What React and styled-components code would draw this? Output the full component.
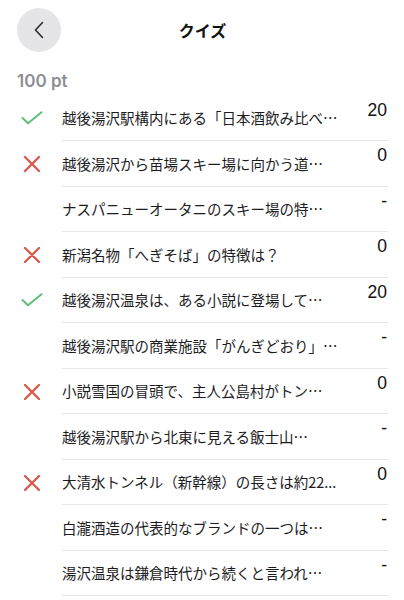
import React from "react";
import styled, { createGlobalStyle } from "styled-components";

const GlobalStyle = createGlobalStyle`
  html, body {
    margin: 0;
    padding: 0;
    background: #ffffff;
  }
  body {
    font-family: "Liberation Sans", "Noto Sans CJK JP", sans-serif;
    color: #1c1c1e;
    -webkit-font-smoothing: antialiased;
  }
`;

const Page = styled.div`
  width: 404px;
  height: 600px;
  overflow: hidden;
  box-sizing: border-box;
  padding: 0 16px 0 17px;
  background: #fff;
`;

const Header = styled.header`
  display: grid;
  grid-template-columns: 44px 1fr 44px;
  align-items: center;
  height: 44px;
  padding-top: 8px;
`;

const BackButton = styled.button`
  width: 44px;
  height: 44px;
  border-radius: 50%;
  border: none;
  padding: 0;
  background: #e5e5e7;
  display: flex;
  align-items: center;
  justify-content: center;
  cursor: pointer;
`;

const Title = styled.h1`
  margin: 0;
  text-align: center;
  font-family: "Noto Sans CJK JP", sans-serif;
  font-size: 16px;
  font-weight: 700;
  color: #111;
  line-height: 20px;
`;

const Points = styled.div`
  margin-top: 19px;
  font-family: "Inter", "Liberation Sans", sans-serif;
  font-size: 17px;
  font-weight: 600;
  line-height: 20px;
  color: #8e8e93;
`;

const List = styled.ul`
  list-style: none;
  margin: 4.5px 0 0 -1px;
  padding: 0;
`;

const Row = styled.li`
  display: flex;
  height: 45.5px;
`;

const IconCell = styled.div`
  width: 46px;
  flex: none;
  display: flex;
  align-items: center;
`;

const IconBox = styled.div`
  width: 32px;
  display: flex;
  justify-content: center;
  align-items: center;
  margin-top: ${(p) => p.$offset || 0}px;
`;

const Content = styled.div`
  flex: 1;
  min-width: 0;
  display: flex;
  justify-content: space-between;
  box-sizing: border-box;
  border-bottom: 1px solid #e6e6e8;
  padding-right: 1px;
`;

const Question = styled.span`
  align-self: center;
  font-family: "Noto Sans CJK JP", sans-serif;
  font-size: 14.5px;
  line-height: 20px;
  color: #1c1c1e;
  white-space: nowrap;
  overflow: hidden;
  margin-top: 1px;
`;

const Score = styled.span`
  align-self: flex-start;
  padding-top: 4px;
  font-family: "Liberation Sans", sans-serif;
  font-size: 17.5px;
  line-height: 20px;
  color: #111;
  flex: none;
`;

const Check = () => (
  <svg width="22" height="14" viewBox="0 0 22 14" fill="none">
    <path
      d="M1.5 7 L7 12.3 L20.5 1.2"
      stroke="#5cbf76"
      strokeWidth="2"
      strokeLinecap="round"
      strokeLinejoin="round"
    />
  </svg>
);

const Cross = () => (
  <svg width="18" height="18" viewBox="0 0 18 18" fill="none">
    <path
      d="M2 2 L16 16 M16 2 L2 16"
      stroke="#d9574b"
      strokeWidth="2.3"
      strokeLinecap="round"
    />
  </svg>
);

const Chevron = () => (
  <svg width="12" height="18" viewBox="0 0 12 18" fill="none">
    <path
      d="M9.5 1.5 L2.5 9 L9.5 16.5"
      stroke="#2c2c2e"
      strokeWidth="1.6"
      strokeLinecap="round"
      strokeLinejoin="round"
    />
  </svg>
);

const items = [
  { r: "ok", q: "越後湯沢駅構内にある「日本酒飲み比べ…", s: "20" },
  { r: "ng", q: "越後湯沢から苗場スキー場に向かう道…", s: "0" },
  { r: null, q: "ナスパニューオータニのスキー場の特…", s: "-" },
  { r: "ng", q: "新潟名物「へぎそば」の特徴は？", s: "0" },
  { r: "ok", q: "越後湯沢温泉は、ある小説に登場して…", s: "20" },
  { r: null, q: "越後湯沢駅の商業施設「がんぎどおり」…", s: "-" },
  { r: "ng", q: "小説雪国の冒頭で、主人公島村がトン…", s: "0" },
  { r: null, q: "越後湯沢駅から北東に見える飯士山…", s: "-" },
  { r: "ng", q: "大清水トンネル（新幹線）の長さは約22...", s: "0" },
  { r: null, q: "白瀧酒造の代表的なブランドの一つは…", s: "-" },
  { r: null, q: "湯沢温泉は鎌倉時代から続くと言われ…", s: "-" },
];

export default function App() {
  return (
    <>
      <GlobalStyle />
      <Page>
        <Header>
          <BackButton aria-label="戻る">
            <Chevron />
          </BackButton>
          <Title>クイズ</Title>
          <span />
        </Header>
        <Points>100 pt</Points>
        <List>
          {items.map((it, i) => (
            <Row key={i}>
              <IconCell>
                <IconBox $offset={it.r === "ok" ? 0 : 1}>
                  {it.r === "ok" && <Check />}
                  {it.r === "ng" && <Cross />}
                </IconBox>
              </IconCell>
              <Content>
                <Question>{it.q}</Question>
                <Score>{it.s}</Score>
              </Content>
            </Row>
          ))}
        </List>
      </Page>
    </>
  );
}
